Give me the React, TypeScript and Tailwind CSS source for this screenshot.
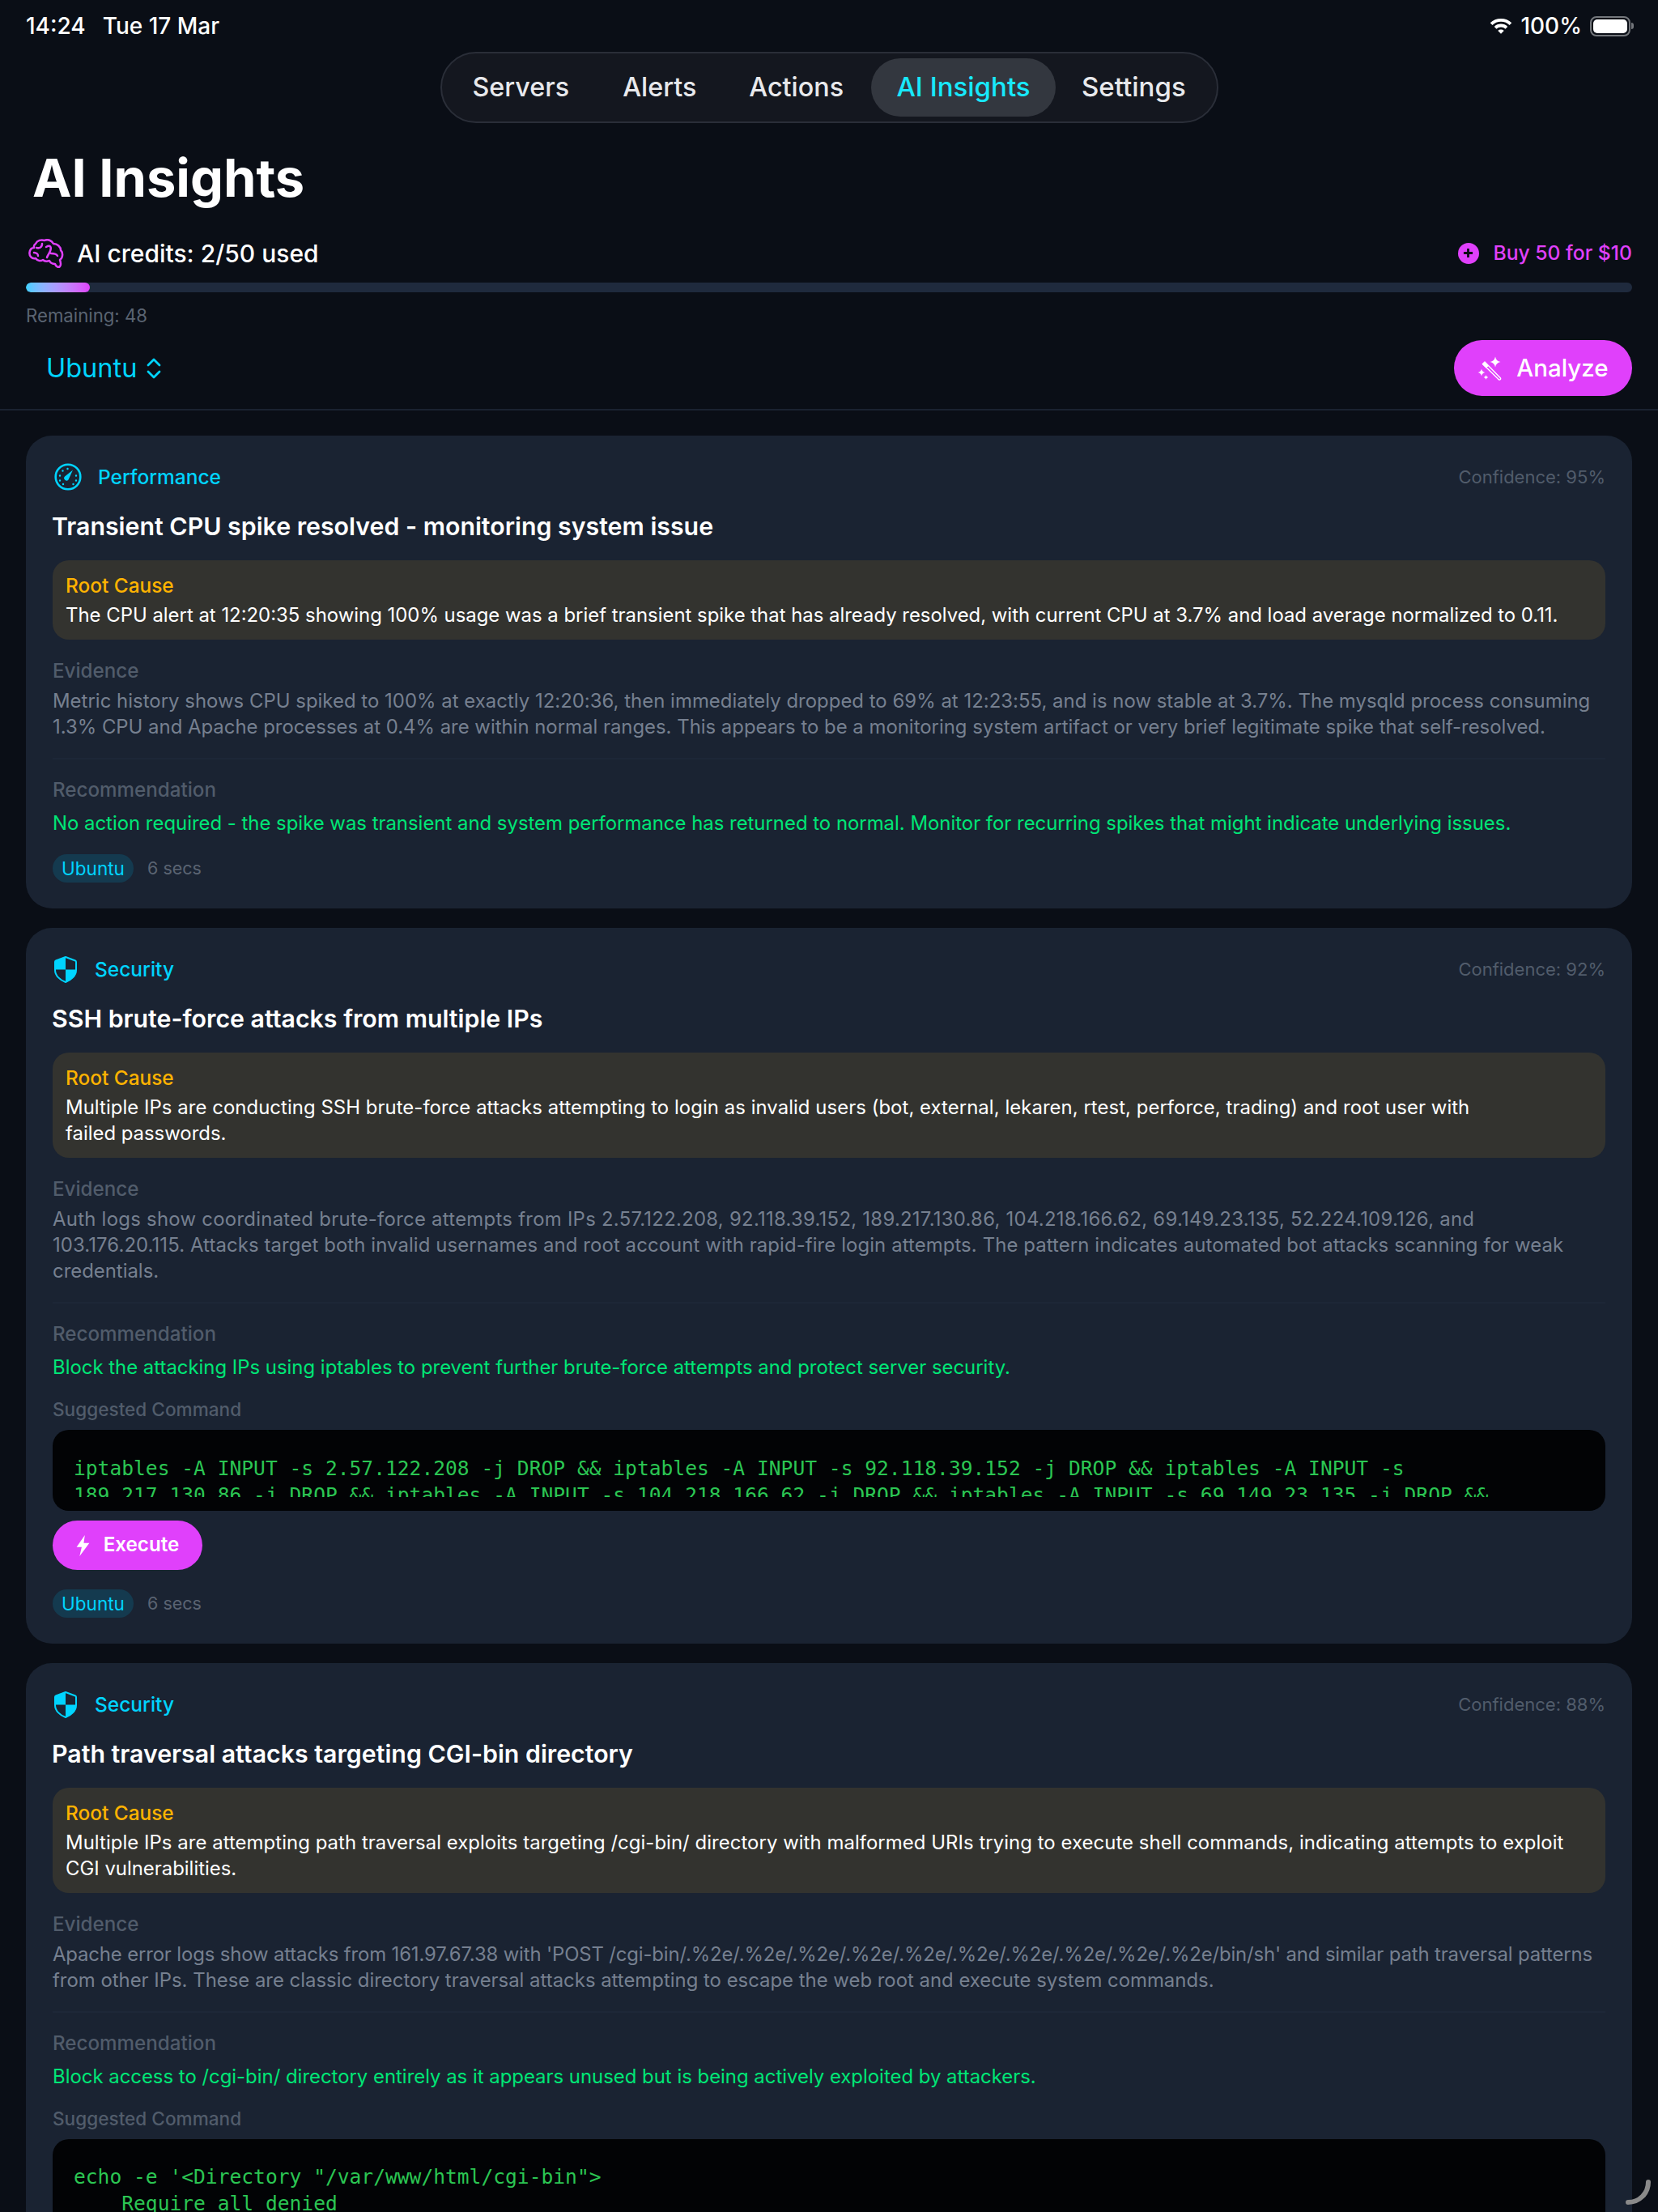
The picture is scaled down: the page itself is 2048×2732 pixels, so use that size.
import React from "react";

const Brain = () => (
  <svg viewBox="0 0 44 37" className="w-[44px] h-[37px]" fill="none" stroke="#e040fb" strokeWidth="2.500" strokeLinecap="round" strokeLinejoin="round">
    <path d="M9 6C11 2 16 .5 20 2 24 0 29 2 31 6 36 6 40 10 40 14 43 17 43 23 39 26 40 29 41 32 39 34 37 36 34 34 33 31 30 31 27 29 26 27 23 28 20 28 18 26 15 28 11 27 9 24 4 25 1 21 1.500 17 2 13 4 11 7 11 6.500 9 7.500 7 9 6Z" />
    <path d="M10 11C13 12 17 11 17 6M22 10C27 7 29 10 27 15 26 18 24 20 23 23M28 18C31 18 35 19 36 21M7 17C10 17 12 19 12 21" />
  </svg>
);

const Gauge = () => (
  <svg viewBox="0 0 34 34" className="w-[34px] h-[34px]" fill="none" stroke="#00d4ff" strokeLinecap="round">
    <circle cx="17" cy="17" r="15.300" strokeWidth="2.600" />
    <path d="M23 8.500 17.500 20.500A2.900 2.900 0 0 1 13 16.500Z" fill="#00d4ff" stroke="none" />
    <g strokeWidth="2.400">
      <path d="M16.500 7v.1M10.500 9.500v.1M7 15.500v.1M7 21.500v.1M11 26v.1M23.500 26v.1M27 21.500v.1M27 15.500v.1" />
    </g>
  </svg>
);

const Shield = () => (
  <svg viewBox="0 0 28 33" className="w-[28px] h-[33px]">
    <path d="M14 1 26 5.500C26.800 5.800 27 6.300 27 7V17C27 24 21 29.500 14 32 7 29.500 1 24 1 17V7C1 6.300 1.200 5.800 2 5.500Z" fill="none" stroke="#00d4ff" strokeWidth="2" strokeLinejoin="round" />
    <path d="M14 1 2 5.500C1.200 5.800 1 6.300 1 7V16.500H14ZM14 16.500H27C27 24 21 29.500 14 32Z" fill="#00d4ff" />
  </svg>
);

const Wand = () => (
  <svg viewBox="0 0 30 30" className="w-[30px] h-[30px]" fill="none" stroke="#fff" strokeLinejoin="round" strokeLinecap="round">
    <path d="M6.500 9.500 9 7 28.500 27C29 28.500 27.500 29.500 26.500 29Z" strokeWidth="1.400" />
    <path d="M6.500 9.500 9 7 13.500 11.500 11 14Z" fill="#fff" strokeWidth="1" />
    <path d="M22 .5Q23 6 28.500 7 23 8 22 13.500 21 8 15.500 7 21 6 22 .5ZM5 15.500Q5.700 19.300 9.500 20 5.700 20.700 5 24.500 4.300 20.700 .5 20 4.300 19.300 5 15.500ZM10.500 23.200Q11 25.500 13.300 26 11 26.500 10.500 28.800 10 26.500 7.700 26 10 25.500 10.500 23.200Z" fill="#fff" stroke="none" />
  </svg>
);

const Bolt = () => (
  <svg viewBox="0 0 18 28" className="w-[17px] h-[26px]" fill="#fff">
    <path d="M11.500 0 .5 16h6.800L4.500 28 17.500 10.500H10L11.500 0Z" />
  </svg>
);

const Label = ({ children }: { children: React.ReactNode }) => (
  <div className="text-[24.200px] leading-[32px] font-medium text-[#515c6b]">{children}</div>
);

const Tag = () => (
  <div className="flex items-center gap-[17px] h-[35px]">
    <span className="h-[35px] w-[100px] flex items-center justify-center rounded-full bg-[#143a4f] text-[#00d4ff] text-[22.500px]">Ubuntu</span>
    <span className="text-[21.500px] text-[#5a6472]">6 secs</span>
  </div>
);

type CardProps = {
  kind: "perf" | "sec";
  conf: string;
  title: string;
  cause: React.ReactNode;
  evidence: React.ReactNode;
  rec: string;
  code?: React.ReactNode;
  codeTall?: boolean;
  footer?: boolean;
  execute?: boolean;
};

const Card = ({ kind, conf, title, cause, evidence, rec, code, codeTall, footer, execute }: CardProps) => (
  <section className="rounded-[32px] bg-[#1a2332] px-[33px] pt-[34px] pb-[24px] flex flex-col shrink-0">
    <div className="flex items-center justify-between h-[34px] pl-[2px]">
      <div className={`flex items-center ${kind === "perf" ? "gap-[20px]" : "gap-[22px]"} text-[24.500px] font-medium text-[#00d4ff]`}>
        {kind === "perf" ? <Gauge /> : <Shield />}
        <span>{kind === "perf" ? "Performance" : "Security"}</span>
      </div>
      <span className="text-[22px] text-[#515c6b]">{conf}</span>
    </div>
    <h2 className="mt-[24px] -ml-[1px] text-[30.300px] leading-[40px] font-semibold text-white">{title}</h2>
    <div className="mt-[22px] rounded-[20px] bg-[#33332f] px-[16px] pt-[15px] pb-[14px]">
      <div className="text-[24.400px] leading-[32px] font-medium text-[#ffb300]">Root Cause</div>
      <div className="mt-[5px] text-[23.900px] leading-[32px] text-white whitespace-nowrap">{cause}</div>
    </div>
    <div className="mt-[23px]"><Label>Evidence</Label></div>
    <div className="mt-[5px] text-[23.900px] leading-[32px] text-[#768090] whitespace-nowrap">{evidence}</div>
    <div className="mt-[22px] border-t-2 border-[#1d2737]" />
    <div className="mt-[22px]"><Label>Recommendation</Label></div>
    <div className="mt-[9px] text-[23.900px] leading-[32px] text-[#00e676] whitespace-nowrap">{rec}</div>
    {code ? (
      <>
        <div className="mt-[21px] text-[22.600px] leading-[30px] font-medium text-[#515c6b]">Suggested Command</div>
        <div className={`mt-[10px] rounded-[20px] bg-[#020305] px-[26px] ${codeTall ? "pt-[30px] pb-[40px]" : "pt-[31px] pb-[17px]"}`}>
          <pre className={`font-['DejaVu_Sans_Mono',monospace] text-[24.600px] leading-[33px] text-[#2bc653] overflow-hidden ${codeTall ? "" : "h-[52px]"}`}>{code}</pre>
        </div>
      </>
    ) : null}
    {execute ? (
      <div className="mt-[12px] self-start h-[61px] w-[185px] rounded-full bg-[#e040fb] flex items-center justify-center gap-[17px] text-[24.200px] font-semibold text-white">
        <Bolt />
        <span>Execute</span>
      </div>
    ) : null}
    {footer ? (
      <div className={execute ? "mt-[24px] mb-[8px]" : "mt-[22px] mb-[8px]"}>
        <Tag />
      </div>
    ) : null}
  </section>
);

export default function App() {
  return (
    <div className="relative h-[2732px] w-[2048px] overflow-hidden bg-[#0a0e16] font-['Inter',sans-serif] text-white">
      <header className="h-[64px] pl-[32px] pr-[30px] pt-[13px] flex justify-between items-start">
        <div className="flex gap-[21px] text-[28px] leading-[38px] font-medium text-white"><span>14:24</span><span>Tue 17 Mar</span></div>
        <div className="flex items-center gap-[10px] h-[38px] text-[28px] font-medium">
          <svg viewBox="0 0 30 24" className="w-[28px] h-[22px]" fill="none" stroke="#fff" strokeWidth="4.200" strokeLinecap="butt">
            <path d="M2 9.500c7-7 19-7 26 0" />
            <path d="M7.500 14.500c4-4 11-4 15 0" />
            <path d="M15 22.500 11 18.500c2.200-2 5.800-2 8 0Z" fill="#fff" stroke="none" />
          </svg>
          <span>100%</span>
          <div className="flex items-center gap-[1px]">
            <div className="w-[50px] h-[25px] rounded-[8px] border-2 border-[#74777c] p-[2px]"><div className="h-full rounded-[5px] bg-white" /></div>
            <div className="w-[3px] h-[8px] rounded-r-full bg-[#74777c]" />
          </div>
        </div>
      </header>

      <nav className="mx-auto w-[961px] h-[88px] rounded-[44px] bg-[#14171f] border-2 border-[#2a2e38] flex items-center pl-[38px] text-[32.300px] font-medium text-[#e8e9ec]">
        <span>Servers</span>
        <span className="ml-[66px]">Alerts</span>
        <span className="ml-[65px]">Actions</span>
        <span className="ml-[34px] h-[72px] w-[228px] rounded-[36px] bg-[#33373f] flex items-center justify-center text-[33px] text-[#18e8fb]">AI Insights</span>
        <span className="ml-[32px] text-[33px]">Settings</span>
      </nav>

      <div className="px-[32px]">
        <h1 className="mt-[27px] pl-[8px] text-[65px] leading-[82px] font-bold text-white">AI Insights</h1>
        <div className="mt-[33px] flex items-center justify-between h-[38px]">
          <div className="flex items-center gap-[16px] pl-[3px] text-[30px] font-medium text-white">
            <Brain />
            <span>AI credits: 2/50 used</span>
          </div>
          <div className="flex items-center gap-[18px] text-[24.700px] font-medium text-[#e040fb]">
            <span className="w-[26px] h-[26px] rounded-full bg-[#e040fb] flex items-center justify-center">
              <svg viewBox="0 0 14 14" className="w-[13px] h-[13px]" fill="none" stroke="#0a0e16" strokeWidth="3"><path d="M7 1v12M1 7h12" /></svg>
            </span>
            <span>Buy 50 for $10</span>
          </div>
        </div>
        <div className="mt-[17px] h-[12px] rounded-full bg-[#1f2a3d] overflow-hidden">
          <div className="h-full w-[79px] rounded-full bg-gradient-to-r from-[#38d0ff] to-[#e040fb]" />
        </div>
        <div className="mt-[14px] text-[22.200px] leading-[30px] text-[#5a6472]">Remaining: 48</div>
        <div className="mt-[15px] flex items-center justify-between h-[69px]">
          <div className="flex items-center gap-[12px] pl-[25px] text-[32.500px] text-[#00d4ff]">
            <span className="relative top-[1px]">Ubuntu</span>
            <svg viewBox="0 0 18 26" className="w-[18px] h-[26px]" fill="none" stroke="#00d4ff" strokeWidth="2.800" strokeLinecap="round" strokeLinejoin="round">
              <path d="M2 9 9 2l7 7M2 17l7 7 7-7" />
            </svg>
          </div>
          <div className="w-[220px] h-[69px] rounded-full bg-[#e040fb] flex items-center justify-center gap-[18px] text-[29.500px] font-medium text-white">
            <Wand />
            <span>Analyze</span>
          </div>
        </div>
      </div>
      <div className="mt-[16px] border-t-2 border-[#1a2230]" />

      <main className="mt-[31px] px-[32px] flex flex-col gap-[24px]">
        <Card
          kind="perf"
          conf="Confidence: 95%"
          title="Transient CPU spike resolved - monitoring system issue"
          cause="The CPU alert at 12:20:35 showing 100% usage was a brief transient spike that has already resolved, with current CPU at 3.7% and load average normalized to 0.11."
          evidence={<><span className="tracking-[0.03px]">Metric history shows CPU spiked to 100% at exactly 12:20:36, then immediately dropped to 69% at 12:23:55, and is now stable at 3.7%. The mysqld process consuming</span><br />1.3% CPU and Apache processes at 0.4% are within normal ranges. This appears to be a monitoring system artifact or very brief legitimate spike that self-resolved.</>}
          rec="No action required - the spike was transient and system performance has returned to normal. Monitor for recurring spikes that might indicate underlying issues."
          footer
        />
        <Card
          kind="sec"
          conf="Confidence: 92%"
          title="SSH brute-force attacks from multiple IPs"
          cause={<><span className="tracking-[0.06px]">Multiple IPs are conducting SSH brute-force attacks attempting to login as invalid users (bot, external, lekaren, rtest, perforce, trading) and root user with</span><br />failed passwords.</>}
          evidence={<><span className="tracking-[0.27px]">Auth logs show coordinated brute-force attempts from IPs 2.57.122.208, 92.118.39.152, 189.217.130.86, 104.218.166.62, 69.149.23.135, 52.224.109.126, and</span><br /><span className="tracking-[0.1px]">103.176.20.115. Attacks target both invalid usernames and root account with rapid-fire login attempts. The pattern indicates automated bot attacks scanning for weak</span><br />credentials.</>}
          rec="Block the attacking IPs using iptables to prevent further brute-force attempts and protect server security."
          code={"iptables -A INPUT -s 2.57.122.208 -j DROP && iptables -A INPUT -s 92.118.39.152 -j DROP && iptables -A INPUT -s\n189.217.130.86 -j DROP && iptables -A INPUT -s 104.218.166.62 -j DROP && iptables -A INPUT -s 69.149.23.135 -j DROP &&"}
          execute
          footer
        />
        <Card
          kind="sec"
          conf="Confidence: 88%"
          title="Path traversal attacks targeting CGI-bin directory"
          cause={<><span className="tracking-[0.06px]">Multiple IPs are attempting path traversal exploits targeting /cgi-bin/ directory with malformed URIs trying to execute shell commands, indicating attempts to exploit</span><br />CGI vulnerabilities.</>}
          evidence={<><span className="tracking-[-0.14px]">Apache error logs show attacks from 161.97.67.38 with 'POST /cgi-bin/.%2e/.%2e/.%2e/.%2e/.%2e/.%2e/.%2e/.%2e/.%2e/.%2e/bin/sh' and similar path traversal patterns</span><br />from other IPs. These are classic directory traversal attacks attempting to escape the web root and execute system commands.</>}
          rec="Block access to /cgi-bin/ directory entirely as it appears unused but is being actively exploited by attackers."
          code={'echo -e \'<Directory "/var/www/html/cgi-bin">\n    Require all denied'}
          codeTall
        />
      </main>

      <svg viewBox="0 0 32 32" className="absolute left-[2008px] top-[2690px] w-[32px] h-[32px] overflow-visible" fill="none" stroke="#8a8a8a" strokeWidth="6" strokeLinecap="round">
        <path d="M28 5C28 19 17 30 3 30" />
      </svg>
    </div>
  );
}
